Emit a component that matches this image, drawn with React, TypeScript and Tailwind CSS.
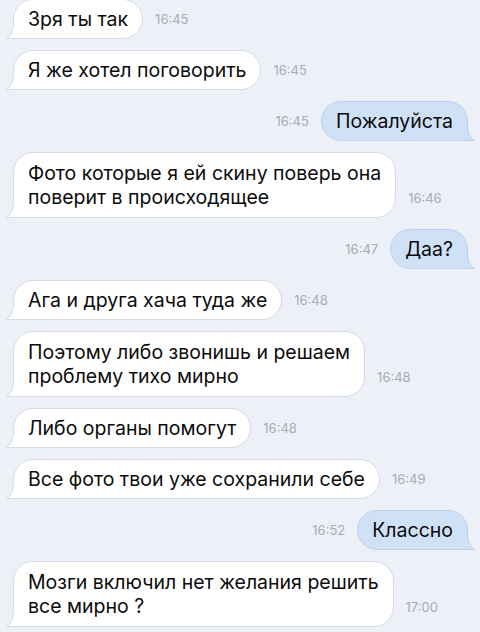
import React from "react";

type Msg = { out?: boolean; lines: string[]; time: string };

const msgs: Msg[] = [
  { lines: ["Зря ты так"], time: "16:45" },
  { lines: ["Я же хотел поговорить"], time: "16:45" },
  { out: true, lines: ["Пожалуйста"], time: "16:45" },
  { lines: ["Фото которые я ей скину поверь она", "поверит в происходящее"], time: "16:46" },
  { out: true, lines: ["Даа?"], time: "16:47" },
  { lines: ["Ага и друга хача туда же"], time: "16:48" },
  { lines: ["Поэтому либо звонишь и решаем", "проблему тихо мирно"], time: "16:48" },
  { lines: ["Либо органы помогут"], time: "16:48" },
  { lines: ["Все фото твои уже сохранили себе"], time: "16:49" },
  { out: true, lines: ["Классно"], time: "16:52" },
  { lines: ["Мозги включил нет желания решить", "все мирно ?"], time: "17:00" },
];

function Tail({ out }: { out?: boolean }) {
  const fill = out ? "#cfe1f7" : "#ffffff";
  const stroke = out ? "#bdd1ea" : "#d5dce6";
  return (
    <svg
      width="20"
      height="18"
      viewBox="0 0 20 18"
      className={
        out
          ? "absolute right-[-8px] bottom-[-1px] -scale-x-100"
          : "absolute left-[-8px] bottom-[-1px]"
      }
    >
      <path d="M7.5 0 C7.5 10 5 15 0.5 17.5 L20 17.5 L20 0 Z" fill={fill} />
      <path d="M7.5 0 C7.5 10 5 15 0.5 17.5 L20 17.5" fill="none" stroke={stroke} strokeWidth="1" />
    </svg>
  );
}

function Bubble({ m }: { m: Msg }) {
  const time = (
    <span className="mb-[12px] text-[13px] leading-4 text-[#a4acb7] shrink-0">{m.time}</span>
  );
  const two = m.lines.length > 1;
  const base = two
    ? "relative rounded-[20px] border px-[14px] py-[8px] text-[19.5px] leading-[24px] text-[#0b0b0b]"
    : "relative rounded-[20px] border px-[14px] py-[7px] text-[19.5px] leading-[24px] text-[#0b0b0b]";
  const bubble = (
    <div
      className={
        m.out
          ? base + " rounded-br-none border-[#bdd1ea] bg-[#cfe1f7]"
          : base + " rounded-bl-none border-[#d5dce6] bg-white"
      }
    >
      <Tail out={m.out} />
      <div className="relative whitespace-nowrap">
        {m.lines.map((l, i) => (
          <div key={i}>{l}</div>
        ))}
      </div>
    </div>
  );
  return m.out ? (
    <div className="flex items-end justify-end gap-[12px] pr-[12px]">
      {time}
      {bubble}
    </div>
  ) : (
    <div className="flex items-end gap-[12px] pl-[13px]">
      {bubble}
      {time}
    </div>
  );
}

export default function App() {
  return (
    <div
      className="w-[480px] h-[632px] overflow-hidden bg-[#edf1f7]"
      style={{ fontFamily: "Inter, 'Liberation Sans', sans-serif" }}
    >
      <div className="flex flex-col gap-[11px] mt-[-1px]">
        {msgs.map((m, i) => (
          <Bubble key={i} m={m} />
        ))}
      </div>
    </div>
  );
}
